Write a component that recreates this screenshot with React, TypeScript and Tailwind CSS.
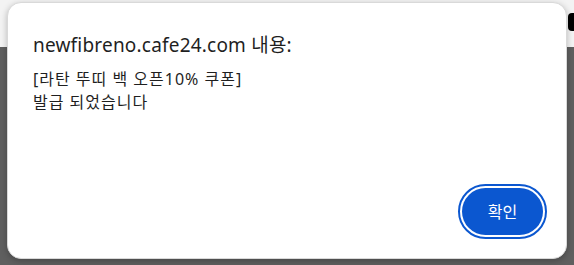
export default function App() {
  return (
    <div
      className="relative w-[574px] h-[265px] overflow-hidden bg-[#5f5f5f]"
      style={{ fontFamily: '"Noto Sans", "Noto Sans CJK KR", sans-serif' }}
    >
      {/* page behind the dialog */}
      <div className="h-[47px] bg-[#f3f3f3]" />
      <div className="absolute right-[-6px] top-[13px] w-[12px] h-[18px] rounded-[4px] bg-black" />

      {/* alert dialog */}
      <div className="absolute left-[7px] top-[2px] w-[560px] h-[257px] rounded-[14px] border border-[#d9d9d9] bg-white shadow-[0_2px_6px_rgba(0,0,0,0.25)] flex flex-col pl-[25px] pr-[19px] pt-[28px] pb-[19px]">
        <div className="text-[19px] leading-[28px] tracking-[0.2px] text-[#1f1f1f]">newfibreno.cafe24.com 내용:</div>
        <div className="mt-[9px] text-[16px] leading-[23px] tracking-[1px] text-[#1f1f1f]">
          <div>[라탄 뚜띠 백 오픈10% 쿠폰]</div>
          <div>발급 되었습니다</div>
        </div>
        <div className="mt-auto flex justify-end">
          <div className="rounded-full border-2 border-[#0b57d0] p-[2px]">
            <button className="h-[47px] w-[81px] rounded-full bg-[#0b57d0] text-white text-[16px]">
              확인
            </button>
          </div>
        </div>
      </div>
    </div>
  )
}
